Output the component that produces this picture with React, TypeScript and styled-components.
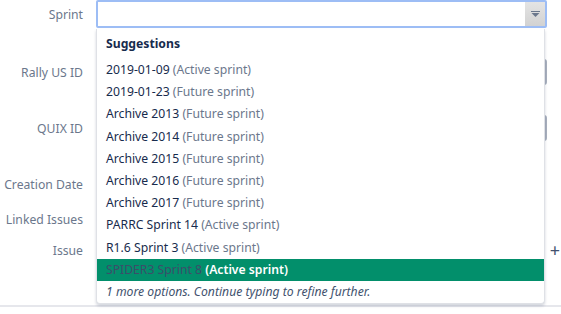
import { FC } from "react";
import styled, { createGlobalStyle } from "styled-components";

const GlobalStyle = createGlobalStyle`
  body {
    margin: 0;
    background: #fff;
    font-family: "Noto Sans", "Open Sans", sans-serif;
    font-size: 12.2px;
    color: #172b4d;
  }
`;

interface SuggestionType {
  name: string;
  state: string;
}

const suggestions: SuggestionType[] = [
  { name: "2019-01-09", state: "Active sprint" },
  { name: "2019-01-23", state: "Future sprint" },
  { name: "Archive 2013", state: "Future sprint" },
  { name: "Archive 2014", state: "Future sprint" },
  { name: "Archive 2015", state: "Future sprint" },
  { name: "Archive 2016", state: "Future sprint" },
  { name: "Archive 2017", state: "Future sprint" },
  { name: "PARRC Sprint 14", state: "Active sprint" },
  { name: "R1.6 Sprint 3", state: "Active sprint" },
  { name: "SPIDER3 Sprint 8", state: "Active sprint" },
];

const ACTIVE = 9;

interface RowPropsType {
  label: string;
  top: number;
  children?: React.ReactNode;
}

const FormRow: FC<RowPropsType> = (props) => {
  return (
    <Row $top={props.top}>
      <Label>{props.label}</Label>
      <Field>{props.children}</Field>
    </Row>
  );
};

export default function App() {
  return (
    <>
      <GlobalStyle />
      <Page>
        <Form>
          <FormRow label="Sprint" top={0}>
            <SprintInput>
              <ArrowButton>
                <svg width="9" height="6" viewBox="0 0 9 6">
                  <rect x="0" y="0" width="9" height="1" fill="#6b778c" />
                  <path d="M0.5 2 L8.5 2 L4.5 6 Z" fill="#6b778c" />
                </svg>
              </ArrowButton>
            </SprintInput>
          </FormRow>
          <FormRow label="Rally US ID" top={30}>
            <TextInput />
          </FormRow>
          <FormRow label="QUIX ID" top={28}>
            <TextInput />
          </FormRow>
          <FormRow label="Creation Date" top={28} />
          <FormRow label="Linked Issues" top={7} />
          <FormRow label="Issue" top={3}>
            <Plus>+</Plus>
          </FormRow>
        </Form>
        <Divider />

        <Dropdown>
          <Heading>Suggestions</Heading>
          {suggestions.map((s, i) => (
            <Item key={s.name} $active={i === ACTIVE}>
              <Name $active={i === ACTIVE}>{s.name}</Name>{" "}
              <State $active={i === ACTIVE}>({s.state})</State>
            </Item>
          ))}
          <More>1 more options. Continue typing to refine further.</More>
        </Dropdown>
      </Page>
    </>
  );
}

const Page = styled.div`
  position: relative;
  width: 561px;
  height: 314px;
  overflow: hidden;
`;

const Form = styled.div`
  display: flex;
  flex-direction: column;
`;

const Row = styled.div<{ $top: number }>`
  display: grid;
  grid-template-columns: 83px 451px;
  column-gap: 13px;
  align-items: center;
  height: 28px;
  margin-top: ${(p) => p.$top}px;
`;

const Label = styled.div`
  text-align: right;
  color: #6b778c;
  white-space: nowrap;
`;

const Field = styled.div`
  position: relative;
  display: flex;
  align-items: center;
  height: 100%;
`;

const SprintInput = styled.div`
  box-sizing: border-box;
  width: 451px;
  height: 28px;
  margin-top: -1px;
  border: 2px solid #9dbdf5;
  border-radius: 2px;
  background: #fff;
  display: flex;
  justify-content: flex-end;
`;

const ArrowButton = styled.div`
  width: 20px;
  height: 100%;
  background: linear-gradient(#e4e4e4, #d2d2d2);
  display: flex;
  align-items: center;
  justify-content: center;
`;

const TextInput = styled.div`
  box-sizing: border-box;
  width: 451px;
  height: 26px;
  border: 2px solid #a9b1be;
  border-radius: 3px;
  background: #fafbfc;
`;

const Plus = styled.span`
  margin-left: auto;
  margin-right: -13px;
  font-size: 18px;
  color: #42526e;
`;

const Divider = styled.div`
  margin-top: 41px;
  height: 2px;
  background: #e6e7ec;
`;

const Dropdown = styled.div`
  position: absolute;
  top: 29px;
  left: 96px;
  width: 449px;
  box-sizing: border-box;
  background: #fff;
  border: 1px solid #dfe1e6;
  border-top: none;
  border-radius: 0 0 4px 4px;
  box-shadow: 0 2px 3px rgba(9, 30, 66, 0.18);
`;

const Heading = styled.div`
  height: 30px;
  line-height: 30px;
  padding-left: 9px;
  font-weight: 700;
  color: #172b4d;
`;

const Item = styled.div<{ $active: boolean }>`
  height: 22.2px;
  line-height: 22px;
  padding-left: 9px;
  white-space: nowrap;
  background: ${(p) => (p.$active ? "#028f6b" : "transparent")};
`;

const Name = styled.span<{ $active: boolean }>`
  color: ${(p) => (p.$active ? "#3d4d6a" : "#172b4d")};
`;

const State = styled.span<{ $active: boolean }>`
  color: ${(p) => (p.$active ? "#ffffff" : "#6b778c")};
  font-weight: ${(p) => (p.$active ? 600 : 400)};
`;

const More = styled.div`
  height: 22px;
  line-height: 22px;
  padding-left: 9px;
  font-style: italic;
  color: #42526e;
`;
